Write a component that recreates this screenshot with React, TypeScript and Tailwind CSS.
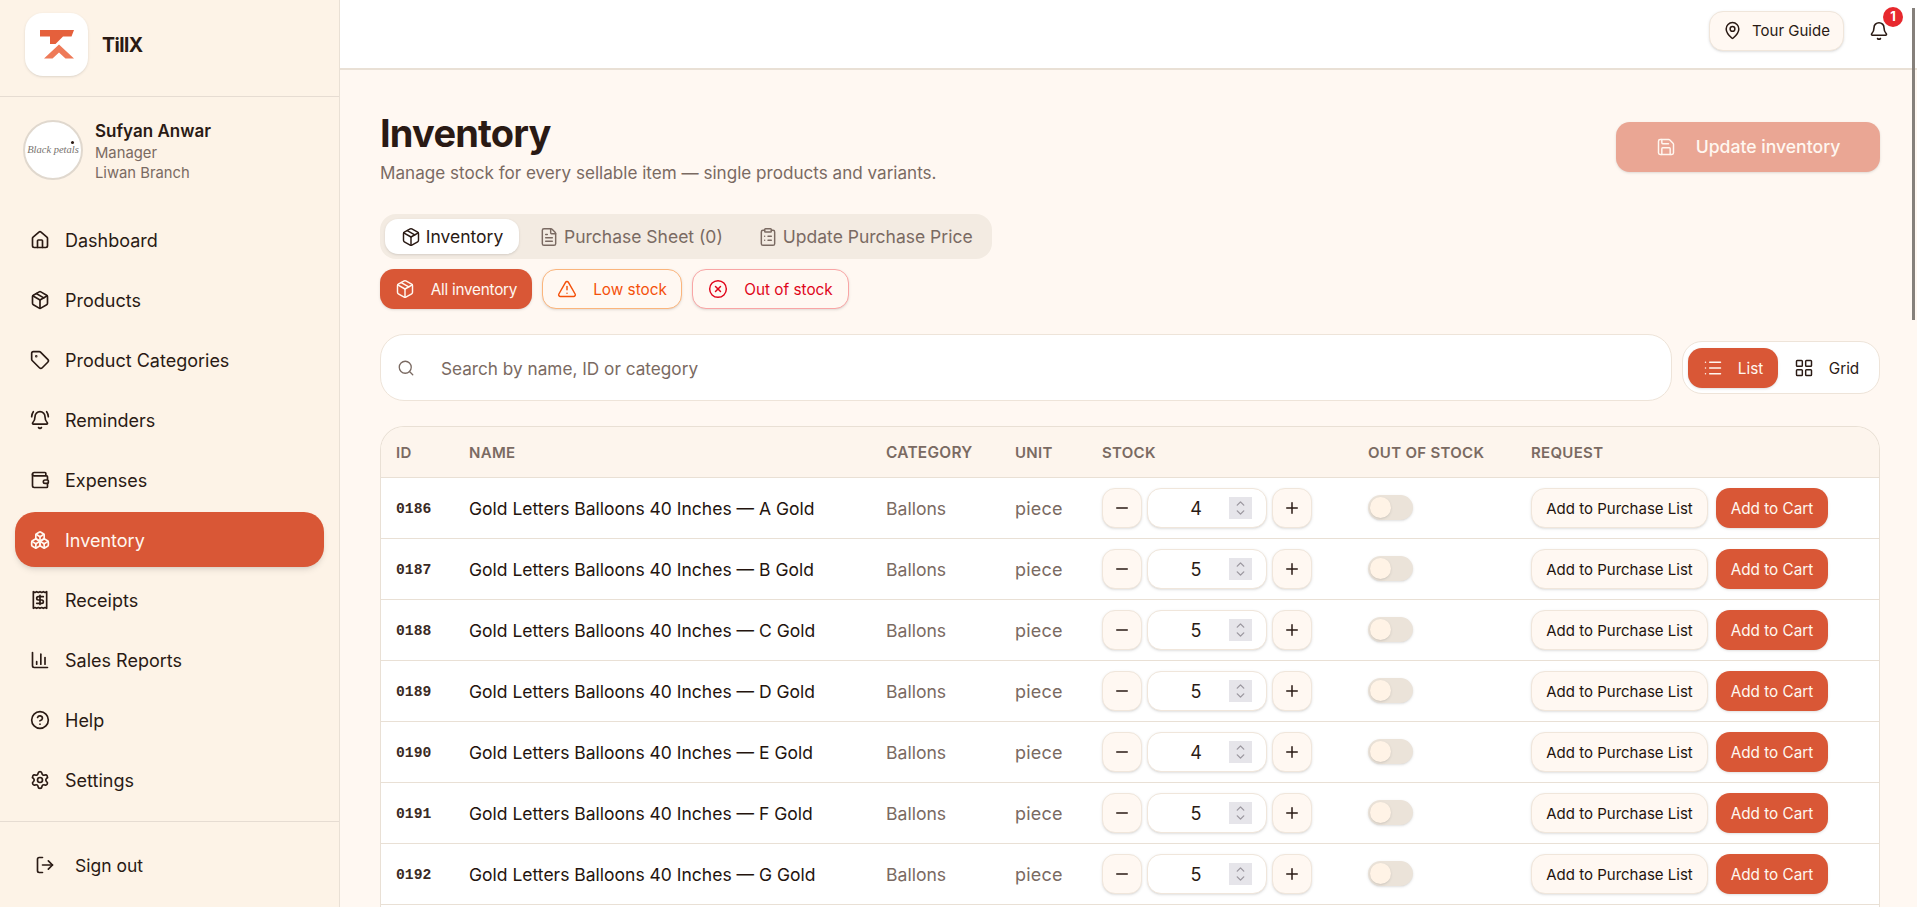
import React from "react";
import { House, Package, Tag, BellRing, Wallet, Boxes, Receipt, ChartColumn, CircleHelp, Settings, LogOut, MapPin, Bell, Save, FileText, ClipboardList, TriangleAlert, CircleX, List, LayoutGrid, Search, Minus, Plus, ChevronUp, ChevronDown } from "lucide-react";

const nav = [
  ["Dashboard", House],
  ["Products", Package],
  ["Product Categories", Tag],
  ["Reminders", BellRing],
  ["Expenses", Wallet],
  ["Inventory", Boxes],
  ["Receipts", Receipt],
  ["Sales Reports", ChartColumn],
  ["Help", CircleHelp],
  ["Settings", Settings],
] as const;

const rows = [
  ["0186", "A", 4],
  ["0187", "B", 5],
  ["0188", "C", 5],
  ["0189", "D", 5],
  ["0190", "E", 4],
  ["0191", "F", 5],
  ["0192", "G", 5],
] as const;

function Logo() {
  return (
    <svg viewBox="0 0 34 29" className="w-[34px] h-[29px]">
      <path d="M0 0H34L31.5 6.5H23L15.5 14H10V6.5H0Z" fill="#e5603c" />
      <path d="M19 14.5L34 28.5H25.5L19 22.5L12.5 28.5H4Z" fill="#ee7a58" />
    </svg>
  );
}

function Sidebar() {
  return (
    <aside className="w-[340px] shrink-0 h-full flex flex-col bg-[#fdf3e7] border-r border-[#e9e0d5]">
      <div className="h-[97px] shrink-0 flex items-center gap-[14px] pl-[25px] pb-[7px] border-b border-[#e6dcd2]">
        <div className="w-[63px] h-[63px] bg-white rounded-[18px] shadow-sm flex items-center justify-center">
          <Logo />
        </div>
        <span className="text-[19.5px] pt-[2px] font-bold tracking-[-0.5px] text-[#2a1a14]">TillX</span>
      </div>
      <div className="flex items-center gap-[12px] pl-[23px] pt-[22px] h-[84px] shrink-0">
        <div className="relative w-[60px] h-[60px] rounded-full bg-white border-2 border-[#e0d8ce] flex items-center justify-center overflow-hidden">
          <span className="text-[10.5px] italic text-[#77726e] font-['Liberation_Serif',serif] whitespace-nowrap">Black petals</span>
          <span className="absolute right-[7px] top-[19px] w-[3px] h-[3px] rounded-full bg-[#2a1a14]" />
        </div>
        <div className="flex flex-col pt-[1px]">
          <span className="text-[17px] leading-[24px] font-semibold text-[#2a1a14]">Sufyan Anwar</span>
          <span className="text-[14.8px] leading-[20px] text-[#7a6a62]">Manager</span>
          <span className="text-[14.8px] leading-[20px] text-[#7a6a62]">Liwan Branch</span>
        </div>
      </div>
      <nav className="flex flex-col gap-[5px] px-[15px] pt-[31px] flex-1">
        {nav.map(([label, Icon]) => {
          const active = label === "Inventory";
          return (
            <div key={label} className={`h-[55px] flex items-center gap-[15px] pl-[15px] rounded-[20px] text-[18px] ${active ? "bg-[#d95736] text-[#fff7f0] shadow-md" : "text-[#2a1a14]"}`}>
              <Icon size={20} strokeWidth={2} />
              <span className="pt-[1px]">{label}</span>
            </div>
          );
        })}
      </nav>
      <div className="h-[86px] shrink-0 border-t border-[#e6dcd2] flex items-center gap-[20px] pl-[35px] text-[17.5px] text-[#2a1a14]">
        <LogOut size={20} strokeWidth={2} />
        <span className="pt-[3px]">Sign out</span>
      </div>
    </aside>
  );
}

function Header() {
  return (
    <header className="h-[70px] shrink-0 bg-white border-b-2 border-[#e9e0d5] flex items-center justify-end pr-[16px] pb-[7px] gap-[25px]">
      <button className="h-[40px] w-[135px] rounded-[14px] bg-[#fff8f2] border border-[#f0e6db] shadow-sm flex items-center justify-center gap-[10px] text-[15px] text-[#2a1a14]">
        <MapPin size={19} strokeWidth={1.9} />
        <span className="pt-[1px]">Tour Guide</span>
      </button>
      <div className="relative w-[32px] h-[40px] flex items-center">
        <Bell size={20} strokeWidth={1.9} className="text-[#2a1a14]" />
        <span className="absolute left-[14px] -top-[4px] w-[20px] h-[20px] rounded-full bg-[#e7282d] text-white text-[13px] font-bold flex items-center justify-center">1</span>
      </div>
    </header>
  );
}

function Row({ id, letter, qty }: { id: string; letter: string; qty: number }) {
  return (
    <div className="h-[61px] shrink-0 flex items-center border-b border-[#e9e0d5] bg-white">
      <span className="w-[88px] pl-[15px] pt-[2px] font-['Liberation_Mono',monospace] font-bold text-[14.7px] text-[#3a2a24]">{id}</span>
      <span className="w-[417px] pt-[2px] text-[17.5px] text-[#24140e]">Gold Letters Balloons 40 Inches — {letter} Gold</span>
      <span className="w-[129px] pt-[2px] text-[17.6px] text-[#7a6a62]">Ballons</span>
      <span className="w-[87px] pt-[1px] text-[18px] tracking-[0.2px] text-[#7a6a62]">piece</span>
      <div className="w-[266px] flex items-center gap-[5px]">
        <button className="w-[40px] h-[40px] rounded-[13px] bg-[#fff8f2] border border-[#f0e6db] shadow-sm flex items-center justify-center text-[#2a1a14]"><Minus size={18} strokeWidth={2} /></button>
        <div className="relative w-[120px] h-[40px] rounded-[14px] bg-white border border-[#f0e6db] shadow-sm">
          <span className="absolute left-0 top-0 w-[96px] h-full flex items-center justify-center text-[18px] pt-[1px] text-[#2a1a14]">{qty}</span>
          <span className="absolute left-[81px] top-[8px] w-[23px] h-[22px] bg-[#e6e5ea] flex flex-col items-center justify-center text-[#9c98a0]">
            <ChevronUp size={13} strokeWidth={2.5} className="-mb-[2px]" />
            <ChevronDown size={13} strokeWidth={2.5} className="-mt-[2px]" />
          </span>
        </div>
        <button className="w-[40px] h-[40px] rounded-[13px] bg-[#fff8f2] border border-[#f0e6db] shadow-sm flex items-center justify-center text-[#2a1a14]"><Plus size={18} strokeWidth={2} /></button>
      </div>
      <div className="w-[163px] flex">
        <div className="w-[45px] h-[25px] -mt-[2px] rounded-full bg-[#ebe3d9] flex items-center pl-[2px] shadow-sm">
          <div className="w-[21px] h-[21px] rounded-full bg-[#fff3e6] shadow" />
        </div>
      </div>
      <div className="flex items-center gap-[8px]">
        <button className="w-[177px] h-[40px] pt-[2px] rounded-[14px] bg-[#fff8f2] border border-[#f0e6db] shadow-sm text-[15px] text-[#24140e]">Add to Purchase List</button>
        <button className="w-[112px] h-[40px] pt-[2px] rounded-[14px] bg-[#d95736] shadow-sm text-[15.3px] text-[#fff7f0]">Add to Cart</button>
      </div>
    </div>
  );
}

export default function App() {
  return (
    <div className="relative h-screen w-full flex overflow-hidden bg-[#fff8f2] font-['Inter',sans-serif]">
      <Sidebar />
      <main className="flex-1 min-w-0 h-full flex flex-col overflow-hidden">
        <Header />
        <div className="flex-1 min-h-0 overflow-hidden pl-[40px] pr-[37px]">
          <div className="flex items-start justify-between pt-[38px] h-[144px]">
            <div>
              <h1 className="text-[38px] leading-[50px] font-bold tracking-[-0.8px] text-[#2a1a14]">Inventory</h1>
              <p className="text-[17.1px] leading-[24px] mt-[2px] pt-[1px] text-[#7a6a62]">Manage stock for every sellable item — single products and variants.</p>
            </div>
            <button className="mt-[14px] w-[264px] h-[50px] rounded-[14px] bg-[#eaa694] shadow-sm flex items-center justify-center gap-[20px] text-[17.6px] font-medium text-[#fff7f0]">
              <Save size={20} strokeWidth={1.75} />
              Update inventory
            </button>
          </div>
          <div className="w-[612px] h-[45px] rounded-[16px] bg-[#f3ebe2] flex items-center px-[5px] gap-[5px] text-[17.5px] whitespace-nowrap">
            <div className="w-[134px] shrink-0 h-[35px] rounded-[13px] bg-white shadow-sm flex items-center justify-center gap-[5px] text-[#2a1a14]"><Package size={20} strokeWidth={1.75} /><span className="pt-[2px]">Inventory</span></div>
            <div className="h-[35px] shrink-0 px-[15px] flex items-center gap-[5px] text-[#7a6a62]"><FileText size={20} strokeWidth={1.75} /><span className="pt-[2px]">Purchase Sheet (0)</span></div>
            <div className="h-[35px] shrink-0 px-[15px] flex items-center gap-[5px] text-[#7a6a62]"><ClipboardList size={20} strokeWidth={1.75} /><span className="pt-[2px]">Update Purchase Price</span></div>
          </div>
          <div className="flex gap-[10px] mt-[10px] text-[15.3px]">
            <div className="w-[152px] h-[40px] rounded-[14px] bg-[#d95736] shadow-sm text-[#fff7f0] flex items-center justify-center gap-[16px]"><Package size={20} strokeWidth={1.75} /><span className="pt-[2px] tracking-[-0.25px]">All inventory</span></div>
            <div className="w-[140px] h-[40px] rounded-[14px] bg-[#fff8f2] border border-[#fbb57c] shadow-sm text-[#f4510b] flex items-center justify-center gap-[16px]"><TriangleAlert size={20} strokeWidth={1.75} /><span className="pt-[2px]">Low stock</span></div>
            <div className="w-[157px] h-[40px] rounded-[14px] bg-[#fff8f2] border border-[#f9a5a5] shadow-sm text-[#e0061b] flex items-center justify-center gap-[16px]"><CircleX size={20} strokeWidth={1.75} /><span className="pt-[2px]">Out of stock</span></div>
          </div>
          <div className="flex items-center gap-[10px] mt-[25px]">
            <div className="flex-1 h-[67px] rounded-[24px] bg-white border border-[#eee4d9] flex items-center pl-[16px] gap-[26px] text-[17.2px] text-[#7a6a62]">
              <Search size={18} strokeWidth={1.75} />
              <span className="pt-[2px]">Search by name, ID or category</span>
            </div>
            <div className="w-[198px] h-[53px] rounded-[20px] bg-white border border-[#eee4d9] flex items-center pl-[5px] text-[15.3px]">
              <div className="w-[90px] h-[40px] rounded-[14px] bg-[#d95736] text-[#fff7f0] shadow-sm flex items-center justify-center gap-[15px]"><List size={20} strokeWidth={1.75} /><span className="pt-[3px]">List</span></div>
              <div className="w-[97px] h-[40px] text-[#2a1a14] flex items-center justify-center gap-[15px]"><LayoutGrid size={20} strokeWidth={1.75} /><span className="pt-[3px]">Grid</span></div>
            </div>
          </div>
          <div className="mt-[25px] rounded-t-[24px] border-x border-t border-[#e9e0d5] overflow-hidden">
            <div className="h-[51px] flex items-center bg-[#fdf5ed] border-b border-[#e9e0d5] text-[15px] font-semibold tracking-[0.3px] text-[#7a6a62]">
              <span className="w-[88px] pl-[15px] pt-[2px]">ID</span>
              <span className="w-[417px] pt-[2px]">NAME</span>
              <span className="w-[129px] pt-[2px] text-[15.4px]">CATEGORY</span>
              <span className="w-[87px] pt-[2px]">UNIT</span>
              <span className="w-[266px] pt-[2px]">STOCK</span>
              <span className="w-[163px] pt-[2px]">OUT OF STOCK</span>
              <span className="pt-[2px]">REQUEST</span>
            </div>
            {rows.map(([id, l, q]) => <Row key={id} id={id} letter={l} qty={q} />)}
            <div className="h-[20px] bg-white" />
          </div>
        </div>
      </main>
      <div className="absolute right-[2px] top-[8px] w-[3px] h-[312px] bg-[#85807b]" />
    </div>
  );
}
